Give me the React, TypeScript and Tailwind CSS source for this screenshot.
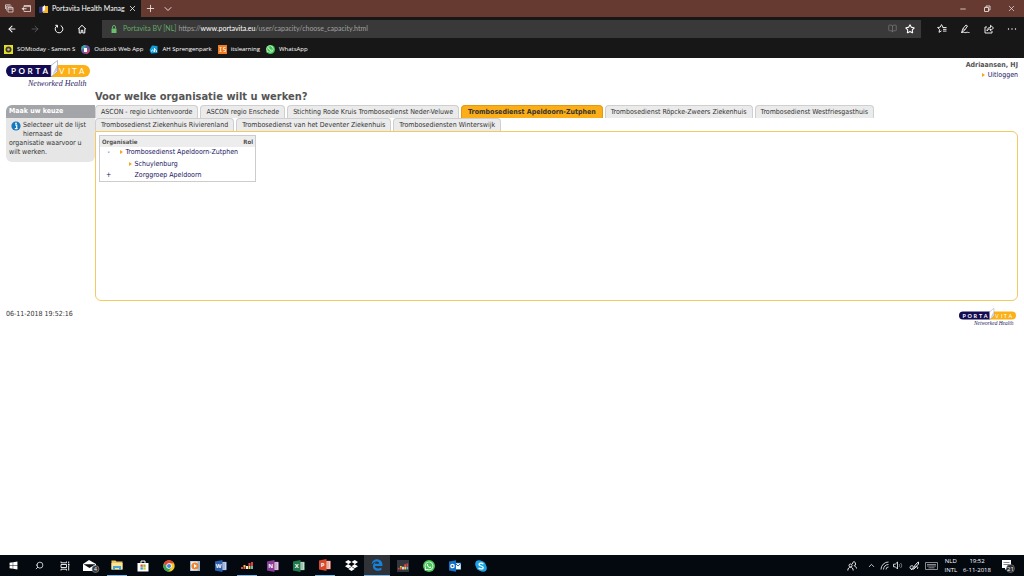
import type { ReactNode } from "react";
import { ArrowLeft, ArrowRight, BookOpen, ChevronDown, ChevronUp, Minus, Plus, Search, Star, X } from "lucide-react";
import { FaDropbox, FaEdgeLegacy, FaWhatsapp, FaWindows } from "react-icons/fa";

const tabRows = [
  [
    "ASCON - regio Lichtenvoorde",
    "ASCON regio Enschede",
    "Stichting Rode Kruis Trombosedienst Neder-Veluwe",
    "Trombosedienst Apeldoorn-Zutphen",
    "Trombosedienst Röpcke-Zweers Ziekenhuis",
    "Trombosedienst Westfriesgasthuis",
  ],
  [
    "Trombosedienst Ziekenhuis Rivierenland",
    "Trombosedienst van het Deventer Ziekenhuis",
    "Trombosediensten Winterswijk",
  ],
];

const activeTab = "Trombosedienst Apeldoorn-Zutphen";

function Logo({ className }: { className: string }) {
  return (
    <svg viewBox="0 0 84 28" className={className} role="img" aria-label="Portavita Networked Health">
      <path d="M6 5h40v12H6a6 6 0 0 1 0-12z" fill="#120b52" />
      <path d="M52 5h26a6 6 0 0 1 0 12H45z" fill="#fcb016" />
      <path d="M45 5.5 51.5 0.5V11.5L45 17z" fill="#fff" stroke="#8a8db0" strokeWidth="0.6" />
      <path d="M46.5 14.500 51 5v6z" fill="#c9cbdc" />
      <text x="5 12.5 21.5 29.5 36.5" y="14" fontSize="8" fontWeight="700" fill="#fff" fontFamily="Lato, sans-serif">PORTA</text>
      <text x="53 62 66 73" y="14" fontSize="8" fill="#fff" fontFamily="Lato, sans-serif">VITA</text>
      <text x="22" y="25.5" fontSize="8" fontStyle="italic" fill="#28235f" fontFamily="Liberation Serif, serif">Networked Health</text>
    </svg>
  );
}

function Arrow() {
  return (
    <svg viewBox="0 0 3 4" className="h-1 w-[3px] shrink-0" aria-hidden="true">
      <path d="M0 0l3 2-3 2z" fill="#f5a81c" />
    </svg>
  );
}

function OfficeIcon({ color, letter }: { color: string; letter: string }) {
  return (
    <svg viewBox="0 0 12 12" className="size-3">
      <path d="M6 2h5.5v8H6z" fill="#f4f4f4" stroke={color} strokeWidth="0.6" />
      <path d="M7.5 4h3M7.5 6h3M7.5 8h3" stroke={color} strokeWidth="0.8" />
      <path d="M0 1.500 7.500 0v12L0 10.500z" fill={color} />
      <text x="3.7" y="8.2" fontSize="6" fontWeight="700" textAnchor="middle" fill="#fff" fontFamily="Open Sans, sans-serif">{letter}</text>
    </svg>
  );
}

function Equalizer() {
  return (
    <svg viewBox="0 0 14 10" className="h-[10px] w-[14px]">
      <path d="M1 7h2v2H1z" fill="#d94a4a" />
      <path d="M3.500 5h2v2h-2z" fill="#f0c52c" />
      <path d="M3.500 7h2v2h-2z" fill="#e8604a" />
      <path d="M6 6h2v3H6z" fill="#efefef" />
      <path d="M8.500 3h2v3h-2z" fill="#e0484e" />
      <path d="M8.500 6h2v3h-2z" fill="#f0d050" />
      <path d="M11 2h2v4h-2z" fill="#d8414c" />
      <path d="M11 6h2v3h-2z" fill="#62bdb0" />
    </svg>
  );
}

type TaskItem = { label: string; icon: ReactNode; running?: boolean; active?: boolean };

const taskItems: TaskItem[] = [
  { label: "Start", icon: <FaWindows className="size-[9px]" /> },
  { label: "Zoeken", icon: <Search className="size-[9px] -scale-x-100" strokeWidth={2} /> },
  {
    label: "Taakweergave",
    icon: (
      <svg viewBox="0 0 10 10" className="size-[10px]" fill="none" stroke="currentColor" strokeWidth="0.9">
        <path d="M1 3.500h5.500v3H1zM1 0.500v1.300h5.500V0.500M1 9.500V8.200h5.500v1.300M8.700 0.500v2M8.700 5v4.500" />
        <path d="M8 3h1.500v1.500H8z" fill="currentColor" stroke="none" />
      </svg>
    ),
  },
  {
    label: "E-mail",
    icon: (
      <svg viewBox="0 0 18 14" className="h-[14px] w-[18px]">
        <path d="M1 5 7 1l7 4v7H1z" fill="#fff" />
        <path d="M1.500 5.200h12L7.500 9z" fill="#0a0d14" />
        <circle cx="13.500" cy="10" r="3.500" fill="#35383e" stroke="#9a9a9a" strokeWidth="0.6" />
        <text x="13.5" y="12" fontSize="5" textAnchor="middle" fill="#fff" fontFamily="Open Sans, sans-serif">4</text>
      </svg>
    ),
  },
  {
    label: "Verkenner",
    running: true,
    icon: (
      <svg viewBox="0 0 12 12" className="size-3">
        <path d="M0.500 1.500h4l1 1h6v8h-11z" fill="#edc55b" />
        <path d="M0.500 4h11v6.500h-11z" fill="#fbe495" />
        <path d="M2 7h8v4H8V9H4v2H2z" fill="#44a7d7" />
      </svg>
    ),
  },
  {
    label: "Store",
    icon: (
      <svg viewBox="0 0 12 12" className="size-3">
        <path d="M4 3V1h4v2" fill="none" stroke="#fff" />
        <path d="M0.500 3h11v8.500h-11z" fill="#fff" />
        <path d="M3.500 4.500h2.300v2.300H3.500z" fill="#e94f28" />
        <path d="M6.300 4.500h2.300v2.300H6.300z" fill="#7eb72e" />
        <path d="M3.500 7.300h2.300v2.300H3.500z" fill="#25a2df" />
        <path d="M6.300 7.300h2.300v2.300H6.300z" fill="#f3b726" />
      </svg>
    ),
  },
  {
    label: "Chrome",
    icon: (
      <svg viewBox="0 0 12 12" className="size-3">
        <circle cx="6" cy="6" r="5.7" fill="#f6c928" />
        <path d="M1 3.300A5.700 5.700 0 0 1 11 3.300H6L3.700 7.500z" fill="#e3473a" />
        <path d="M1 3.300A5.700 5.700 0 0 0 5.600 11.700L8.300 7.500H3.600z" fill="#35a357" />
        <circle cx="6" cy="6" r="2.7" fill="#fff" />
        <circle cx="6" cy="6" r="2" fill="#4285e8" />
      </svg>
    ),
  },
  {
    label: "Mediaspeler",
    icon: (
      <svg viewBox="0 0 12 12" className="size-3">
        <path d="M1 1h10v10H1z" fill="#9bb5cd" />
        <path d="M2 1.500h6.500v9H2z" fill="#e9edf0" />
        <circle cx="6" cy="6" r="3.6" fill="#f0842c" />
        <path d="M5 4l3 2-3 2z" fill="#fff" />
      </svg>
    ),
  },
  { label: "Word", icon: <OfficeIcon color="#2b5fb0" letter="W" /> },
  { label: "Deezer", icon: <Equalizer />, running: true },
  { label: "OneNote", icon: <OfficeIcon color="#8a3c96" letter="N" /> },
  { label: "Excel", icon: <OfficeIcon color="#1f7a4b" letter="X" /> },
  { label: "PowerPoint", icon: <OfficeIcon color="#d8482c" letter="P" />, running: true },
  { label: "Dropbox", icon: <FaDropbox className="size-[13px]" /> },
  { label: "Edge", icon: <FaEdgeLegacy className="size-3 text-[#1780d8]" />, running: true, active: true },
  {
    label: "Deezer app",
    icon: (
      <span className="flex size-3 items-center justify-center bg-[#33363c]">
        <Equalizer />
      </span>
    ),
  },
  {
    label: "WhatsApp",
    icon: (
      <span className="flex size-3 items-center justify-center rounded-full bg-[#45c655]">
        <FaWhatsapp className="size-[10px]" />
      </span>
    ),
  },
  {
    label: "Outlook",
    icon: (
      <svg viewBox="0 0 12 12" className="size-3">
        <path d="M6 3h6v6.500H6z" fill="#fff" stroke="#1877c9" strokeWidth="0.7" />
        <path d="M6.500 3.500 9 6l2.700-2.500" fill="none" stroke="#1877c9" />
        <path d="M0 1.500 7 0.300v11.400L0 10.500z" fill="#1471c4" />
        <circle cx="3.5" cy="6" r="1.7" fill="none" stroke="#fff" strokeWidth="1.2" />
      </svg>
    ),
  },
  {
    label: "Skype",
    icon: (
      <svg viewBox="0 0 12 12" className="size-3">
        <circle cx="4" cy="4" r="3.8" fill="#1ba4e6" />
        <circle cx="8" cy="8" r="3.8" fill="#1ba4e6" />
        <circle cx="6" cy="6" r="5" fill="#1ba4e6" />
        <path d="M8.200 4.200C7.500 2.700 4 2.700 4 4.500s4.200 1.200 4.200 3.100S4.300 9.300 3.700 7.700" fill="none" stroke="#fff" strokeWidth="1.3" />
      </svg>
    ),
  },
];

function TitleBar() {
  return (
    <div className="flex h-[17px] items-stretch bg-[#663a30] text-[#e5dcda]">
      <div className="flex w-[35px] items-center justify-around pl-px">
        <button aria-label="Opgeslagen tabbladen">
          <svg viewBox="0 0 9 9" className="size-[9px]" fill="none" stroke="currentColor" strokeWidth="0.8">
            <path d="M3 3.500h5v4.500H3zM3 5h5M1.700 6.500V2.200h5M0.500 5V0.800h5" />
          </svg>
        </button>
        <button aria-label="Tabbladen opzij zetten">
          <svg viewBox="0 0 10 9" className="h-[9px] w-[10px]" fill="none" stroke="currentColor" strokeWidth="0.8">
            <path d="M3 3V1.500h6.500v6H3V6.300M3 2.600h6.500" />
            <path d="M0.500 4.700 3 2.900v1.300h2.500v1H3v1.300z" fill="currentColor" stroke="none" />
          </svg>
        </button>
      </div>
      <div className="flex w-[106px] items-center bg-[#171717] pl-1 text-[7px] text-white">
        <svg viewBox="0 0 9 8" className="mr-1 h-2 w-[9px]">
          <path d="M0 2l4-1v7H0z" fill="#34317c" />
          <path d="M5 1h4v7H4z" fill="#f3b42c" />
          <path d="M3.500 2 6 0v5L3.500 7z" fill="#fff" />
        </svg>
        <span className="flex-1 overflow-hidden whitespace-nowrap">Portavita Health Manag</span>
        <button aria-label="Tabblad sluiten" className="mr-1">
          <X className="size-[9px]" strokeWidth={2} />
        </button>
      </div>
      <button aria-label="Nieuw tabblad" className="ml-1 flex items-center">
        <Plus className="size-[11px]" strokeWidth={2} />
      </button>
      <button aria-label="Tabbladvoorbeelden" className="ml-[6px] flex items-center">
        <ChevronDown className="size-3" strokeWidth={2} />
      </button>
      <div className="ml-auto flex items-center gap-4 pr-2">
        <button aria-label="Minimaliseren"><Minus className="size-2" strokeWidth={2.5} /></button>
        <button aria-label="Verkleinen">
          <svg viewBox="0 0 8 8" className="size-2" fill="none" stroke="currentColor" strokeWidth="0.9">
            <path d="M1.500 2.500h4v4h-4zM3 2.500V1h4v4H5.500" />
          </svg>
        </button>
        <button aria-label="Sluiten"><X className="size-[9px]" strokeWidth={2} /></button>
      </div>
    </div>
  );
}

function AddressBar() {
  return (
    <div className="flex h-[23px] items-center text-white">
      <div className="flex w-[102px] items-center justify-between pr-[15px] pl-[7px]">
        <button aria-label="Vorige"><ArrowLeft className="size-[10px]" strokeWidth={2.5} /></button>
        <button aria-label="Volgende" className="text-[#5f5f5f]"><ArrowRight className="size-[10px]" strokeWidth={2} /></button>
        <button aria-label="Vernieuwen">
          <svg viewBox="0 0 10 10" className="size-[10px]" fill="none" stroke="currentColor" strokeWidth="1">
            <path d="M6.700 1.600A3.800 3.800 0 1 1 3 1.800M1.300 1.300H3.500V3.500" />
          </svg>
        </button>
        <button aria-label="Startpagina">
          <svg viewBox="0 0 10 10" className="size-[10px]" fill="none" stroke="currentColor" strokeWidth="1">
            <path d="M1 5.200 5 1.300l4 3.900M2.200 4.500V9h2V6.300h1.600V9h2V4.500" />
          </svg>
        </button>
      </div>
      <div className="flex h-[18px] flex-1 items-center bg-[#393939] pr-[6px] pl-2 text-[7px]">
        <svg viewBox="0 0 8 8" className="mr-[5px] size-2">
          <path d="M1.500 3.500h5V8h-5z" fill="#6abf6e" />
          <path d="M2.500 3.500V2a1.500 1.500 0 0 1 3 0v1.500" fill="none" stroke="#6abf6e" strokeWidth="0.9" />
        </svg>
        <span className="mr-[2px] text-[#62a866]">Portavita BV [NL]</span>
        <span className="text-[#a0a0a0]">
          https://<span className="text-white">www.portavita.eu</span>/user/capacity/choose_capacity.html
        </span>
        <BookOpen className="mr-2 ml-auto size-[9px] text-[#777777]" />
        <button aria-label="Toevoegen aan favorieten"><Star className="size-[10px]" strokeWidth={2.5} /></button>
      </div>
      <div className="flex w-[103px] items-center justify-between pr-[7px] pl-4">
        <button aria-label="Favorieten">
          <svg viewBox="0 0 10 9" className="h-[9px] w-[10px]" fill="none" stroke="currentColor" strokeWidth="0.9">
            <path d="M6 3.200 4.500 0.600 3.200 3.200 0.600 3.500l2 2L2 8.300l2.500-1.400M5.500 3.500H9.500M6 5.300h3.500M6 7.100h3.500" />
          </svg>
        </button>
        <button aria-label="Notitie maken">
          <svg viewBox="0 0 10 10" className="size-[10px]" fill="none" stroke="currentColor" strokeWidth="0.9">
            <path d="M1.500 8.500 3 4.500 6 1l1.500 1-2.700 4zM3 4.500l1.800 1.500M1.500 8.500c3-1 3 .8 4.500 0s2 .3 3.500 0" />
          </svg>
        </button>
        <button aria-label="Delen">
          <svg viewBox="0 0 10 10" className="size-[10px]" fill="none" stroke="currentColor" strokeWidth="0.9">
            <path d="M3 3H1v6h7V7M3 7c0-2.500 1.500-3.500 3.500-3.500V1.300l3 2.700-3 2.700V5C5 5 4 5.500 3 7z" />
          </svg>
        </button>
        <button aria-label="Meer">
          <svg viewBox="0 0 10 10" className="size-[10px]" fill="currentColor">
            <circle cx="1.5" cy="5" r="0.7" />
            <circle cx="5" cy="5" r="0.7" />
            <circle cx="8.5" cy="5" r="0.7" />
          </svg>
        </button>
      </div>
    </div>
  );
}

function Favorites() {
  return (
    <nav className="flex h-[18px] items-center gap-[6px] pl-1 font-['Open_Sans',sans-serif] text-[6px] whitespace-nowrap text-white">
      <a href="#somtoday" className="flex items-center gap-1">
        <svg viewBox="0 0 9 9" className="size-[9px]">
          <path d="M0 0h9v9H0z" fill="#e3df2b" />
          <circle cx="4.5" cy="4.5" r="3" fill="#403b26" />
          <circle cx="4.5" cy="4.5" r="1.3" fill="#c0b99a" />
        </svg>
        SOMtoday - Samen S
      </a>
      <a href="#outlook" className="flex items-center gap-1">
        <svg viewBox="0 0 9 9" className="size-[9px]">
          <circle cx="4.5" cy="4.5" r="4.5" fill="#6b58a5" />
          <path d="M0 4.500A4.500 4.500 0 0 1 4.500 0v4z" fill="#39a89b" />
          <path d="M9 4.500A4.500 4.500 0 0 1 4.500 9V5z" fill="#cc4379" />
          <path d="M3 3h3v4H3z" fill="#fff" />
        </svg>
        Outlook Web App
      </a>
      <a href="#ah" className="flex items-center gap-1">
        <svg viewBox="0 0 9 9" className="size-[9px]">
          <path d="M3 0.500 8.500 1v7L2 8.500 0.500 5z" fill="#12a0dc" />
          <path d="M2.500 6.500c0-2 2-2 2 0M5.500 3v4M5.500 5c1-1 2 0 2 2" fill="none" stroke="#fff" strokeWidth="0.9" />
        </svg>
        AH Sprengenpark
      </a>
      <a href="#itslearning" className="flex items-center gap-1">
        <svg viewBox="0 0 9 9" className="size-[9px]">
          <path d="M0 0h9v9H0z" fill="#ef7b22" />
          <path d="M1.500 2.500h2M2.500 2.500v4M1.500 6.500h2M7.500 2.500h-2v2h2v2h-2" fill="none" stroke="#ffe0c4" strokeWidth="0.9" />
        </svg>
        itslearning
      </a>
      <a href="#whatsapp" className="flex items-center gap-1">
        <span className="flex size-[9px] items-center justify-center rounded-full bg-[#3fc351]">
          <FaWhatsapp className="size-2" />
        </span>
        WhatsApp
      </a>
    </nav>
  );
}

function Sidebar() {
  return (
    <aside className="mt-[15px] w-[89px] shrink-0 text-[7px] leading-[9px] text-[#333333]">
      <h2 className="flex h-[13px] items-center rounded-tl-md bg-[#a4a5a9] pl-[3px] font-bold text-white">Maak uw keuze</h2>
      <div className="rounded-b-md bg-[#e6e6e6] pt-[3px] pr-1 pb-[5px] pl-[3px]">
        <svg viewBox="0 0 10 10" className="float-left mr-[2px] mb-2 ml-[2px] size-[10px]">
          <circle cx="5" cy="5" r="4.6" fill="#1478bd" />
          <path d="M4 4h1.700v3.500M3.800 7.700h2.800" fill="none" stroke="#fff" strokeWidth="1.2" />
          <circle cx="5" cy="2.3" r="0.9" fill="#fff" />
        </svg>
        <p>Selecteer uit de lijst hiernaast de organisatie waarvoor u wilt werken.</p>
      </div>
    </aside>
  );
}

function OrganisationTable() {
  return (
    <table className="w-[157px] border border-[#cccccc] text-left text-[7px] leading-[9px] text-[#1b1464]">
      <thead className="bg-[#ededed] text-[6px] text-[#555555]">
        <tr className="h-[11px]">
          <th colSpan={2} className="pl-[2px]">Organisatie</th>
          <th className="pr-[2px] text-right">Rol</th>
        </tr>
      </thead>
      <tbody>
        <tr>
          <td className="w-[18px] pt-px pb-[2px] text-center"><button aria-label="Inklappen">-</button></td>
          <td colSpan={2} className="pt-px pb-[2px]">
            <a href="#apeldoorn-zutphen" className="flex items-center gap-[3px] pl-[2px]"><Arrow />Trombosedienst Apeldoorn-Zutphen</a>
          </td>
        </tr>
        <tr>
          <td />
          <td colSpan={2} className="py-px">
            <a href="#schuylenburg" className="flex items-center gap-[3px] pl-[11px]"><Arrow />Schuylenburg</a>
          </td>
        </tr>
        <tr>
          <td className="py-px text-center"><button aria-label="Uitklappen">+</button></td>
          <td colSpan={2} className="py-px"><a href="#zorggroep" className="block pl-[17px]">Zorggroep Apeldoorn</a></td>
        </tr>
      </tbody>
    </table>
  );
}

function Portal() {
  return (
    <main className="flex-1 pr-[6px] pl-[6px] font-['DejaVu_Sans_Condensed','DejaVu_Sans',sans-serif] text-[7px] text-[#333333]">
      <header className="flex h-8 items-start justify-between pt-[2px]">
        <Logo className="h-7 w-[84px]" />
        <div className="text-right leading-[10px]">
          <p className="font-bold text-[#555555]">Adriaansen, HJ</p>
          <a href="#uitloggen" className="flex items-center justify-end gap-[3px] text-[#1b1464]"><Arrow />Uitloggen</a>
        </div>
      </header>
      <div className="flex items-start">
        <Sidebar />
        <section className="min-w-0 flex-1">
          <h1 className="h-[15px] text-[11px] leading-[14px] font-bold text-[#555555]">Voor welke organisatie wilt u werken?</h1>
          {tabRows.map((row, i) => (
            <div key={i} className="flex gap-[2px]">
              {row.map((tab) => (
                <button
                  key={tab}
                  className={
                    tab === activeTab
                      ? "h-[13px] rounded-t-sm border border-b-0 border-[#e09a14] bg-[#fbae17] px-[6px] font-bold whitespace-nowrap"
                      : "h-[13px] rounded-t-sm border border-b-0 border-[#cfcfcf] bg-[#ebebeb] px-[5px] whitespace-nowrap"
                  }
                >
                  {tab}
                </button>
              ))}
            </div>
          ))}
          <div className="min-h-[170px] rounded-b-md rounded-tr-md border border-[#f3ca60] pt-[3px] pl-[3px]">
            <OrganisationTable />
          </div>
        </section>
      </div>
      <footer className="flex items-start justify-between pt-[7px] pr-[2px]">
        <time className="leading-3">06-11-2018 19:52:16</time>
        <Logo className="h-[19px] w-[57px]" />
      </footer>
    </main>
  );
}

function Taskbar() {
  return (
    <div className="flex h-[21px] items-stretch bg-[#04080f] text-white">
      {taskItems.map((item) => (
        <button
          key={item.label}
          aria-label={item.label}
          className={item.active ? "flex w-[26px] flex-col items-center bg-[#2f3338]" : "flex w-[26px] flex-col items-center"}
        >
          <span className="flex flex-1 items-center">{item.icon}</span>
          {item.running && <span className={item.active ? "h-px w-full bg-[#76b9ed]" : "h-px w-5 bg-[#76b9ed]"} />}
        </button>
      ))}
      <div className="ml-auto flex items-center gap-1 text-[7px] leading-[9px]">
        <svg viewBox="0 0 10 10" className="mr-[6px] size-[10px]" fill="none" stroke="currentColor" strokeWidth="0.9">
          <circle cx="3.5" cy="4.5" r="1.5" />
          <path d="M0.800 9.500c0-4.500 5.400-4.500 5.400 0M5.500 3c0-3 3-3 3 0s-2 1-1 2 2 .5 2 2.500" />
        </svg>
        <ChevronUp className="size-[9px]" strokeWidth={2} />
        <svg viewBox="0 0 9 9" className="size-[9px]" fill="none" stroke="currentColor" strokeWidth="0.8">
          <path d="M1 8.500A7.500 7.500 0 0 1 8.500 1M3.500 8.500a5 5 0 0 1 5-5M6 8.500A2.500 2.500 0 0 1 8.500 6" />
        </svg>
        <svg viewBox="0 0 10 9" className="mr-[2px] h-[9px] w-[10px]" fill="none" stroke="currentColor" strokeWidth="0.8">
          <path d="M0.500 3.200h1.800L4.500 1v7L2.300 5.800H0.500z" />
          <path d="M6 3c.8 1 .8 2 0 3M7.500 2c1.500 1.600 1.500 3.500 0 5" stroke="#999999" />
        </svg>
        <svg viewBox="0 0 11 10" className="mr-px h-[10px] w-[11px]" fill="none" stroke="currentColor" strokeWidth="0.9">
          <path d="M2 9 8 2l1.500-1v2l-5 5.500M4 5C1 4 0 7 2 8s4-1 3-3M6 6.500c2-2 4 0 2 1.500" />
        </svg>
        <svg viewBox="0 0 13 8" className="mr-[2px] h-2 w-[13px]" fill="none" stroke="#a8abaf" strokeWidth="0.8">
          <path d="M0.500 0.500h12v7H0.500zM2 2.500h9M2 4h9M3.500 5.800h6" />
        </svg>
        <div className="mr-[2px] text-center font-['Open_Sans',sans-serif] text-[6px]">
          <p>NLD</p>
          <p>INTL</p>
        </div>
        <div className="text-center font-['Open_Sans',sans-serif] text-[6px]">
          <p>19:52</p>
          <p>6-11-2018</p>
        </div>
        <svg viewBox="0 0 14 14" className="mr-[9px] ml-[6px] size-[14px]">
          <path d="M1 1h9v8H6l-2 2V9H1z" fill="#fff" />
          <path d="M2.500 3.500h6M2.500 5.500h6" stroke="#555555" strokeWidth="0.7" />
          <circle cx="9.5" cy="9.5" r="4" fill="#2b2e33" stroke="#9a9a9a" strokeWidth="0.5" />
          <text x="9.5" y="11.7" fontSize="6" textAnchor="middle" fill="#fff" fontFamily="Open Sans, sans-serif">21</text>
        </svg>
      </div>
    </div>
  );
}

export default function App() {
  return (
    <div className="flex min-h-screen flex-col bg-white font-['Lato',sans-serif]">
      <TitleBar />
      <div className="bg-[#171717]">
        <AddressBar />
        <Favorites />
      </div>
      <Portal />
      <Taskbar />
    </div>
  );
}
